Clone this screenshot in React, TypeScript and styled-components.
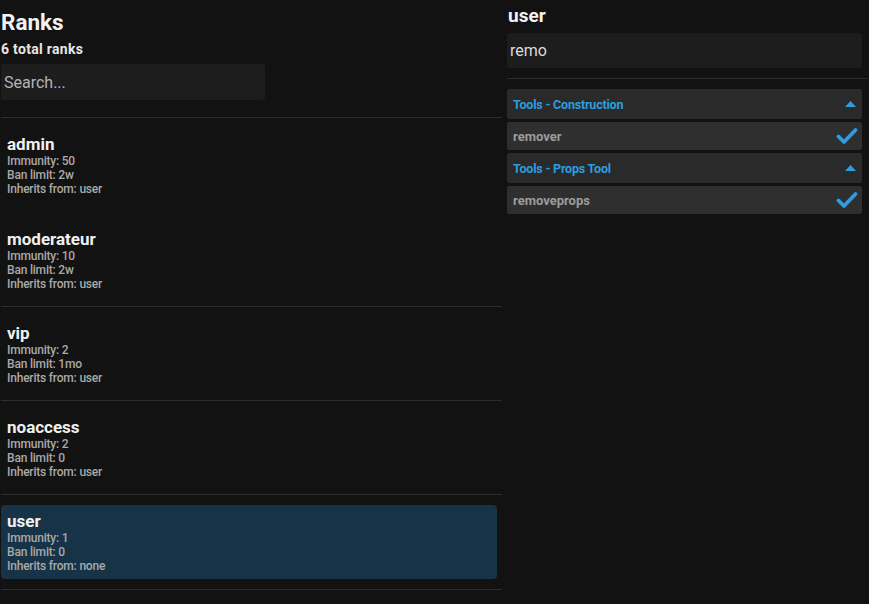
import styled, { createGlobalStyle } from 'styled-components';

const GlobalStyle = createGlobalStyle`
  html, body {
    margin: 0;
    padding: 0;
    background: #121212;
  }
  body {
    font-family: 'Roboto', 'Liberation Sans', sans-serif;
    color: #eeeeee;
  }
`;

const Page = styled.div`
  display: flex;
  align-items: flex-start;
  gap: 5px;
  padding-left: 1px;
  min-height: 604px;
`;

const LeftColumn = styled.div`
  width: 501px;
  display: flex;
  flex-direction: column;
`;

const RightColumn = styled.div`
  width: 360px;
  display: flex;
  flex-direction: column;
`;

const Title = styled.h1`
  margin: 9px 0 0;
  font-size: 22.5px;
  line-height: 26px;
  font-weight: 700;
  color: #f2f2f2;
`;

const Subtitle = styled.div`
  margin-top: 6px;
  font-size: 14px;
  line-height: 16px;
  font-weight: 700;
  letter-spacing: 0.3px;
  color: #e6e6e6;
`;

const SearchInput = styled.input<{ $width: string; $height: number }>`
  box-sizing: border-box;
  width: ${(p) => p.$width};
  height: ${(p) => p.$height}px;
  border: none;
  outline: none;
  border-radius: 3px;
  background: #1d1d1d;
  padding: 0 3px;
  font-family: 'Roboto', 'Liberation Sans', sans-serif;
  font-size: 16px;
  color: #dcdcdc;
  &::placeholder {
    color: #b4b4b4;
  }
`;

const Divider = styled.div<{ $top: number }>`
  margin-top: ${(p) => p.$top}px;
  height: 1px;
  background: #2d2d2d;
`;

const RankList = styled.div`
  display: flex;
  flex-direction: column;
`;

const RankItem = styled.div<{ $first?: boolean }>`
  padding: 10px 5px ${(p) => (p.$first ? 11 : 10)}px 0;
  border-bottom: 1px solid ${(p) => (p.$first ? 'transparent' : '#2d2d2d')};
`;

const RankCard = styled.div<{ $selected?: boolean }>`
  box-sizing: border-box;
  height: ${(p) => (p.$selected ? 74 : 73)}px;
  padding: 5px 6px 0;
  border-radius: 4px;
  background: ${(p) => (p.$selected ? '#163347' : 'transparent')};
`;

const RankName = styled.div`
  font-size: 17px;
  line-height: 22px;
  font-weight: 700;
  color: #f0f0f0;
`;

const RankDetail = styled.div`
  font-size: 12px;
  line-height: 13.8px;
  font-weight: 500;
  letter-spacing: -0.2px;
  color: #a9a9a9;
`;

const UserTitle = styled.h2`
  margin: 5px 0 0 1px;
  font-size: 19px;
  line-height: 22px;
  font-weight: 700;
  color: #f2f2f2;
`;

const PermList = styled.div`
  margin-top: 10px;
  width: 355px;
  display: flex;
  flex-direction: column;
  gap: 3px;
`;

const GroupHeader = styled.div`
  height: 30px;
  display: flex;
  align-items: center;
  justify-content: space-between;
  padding: 0 6px;
  border-radius: 2px;
  background: #2a2a2a;
  font-size: 12.5px;
  font-weight: 700;
  letter-spacing: -0.2px;
  color: #2e9ddf;
`;

const PermRow = styled.div`
  height: 28px;
  display: flex;
  align-items: center;
  justify-content: space-between;
  padding: 0 4px 0 6px;
  border-radius: 2px;
  background: #2f2f2f;
  font-size: 13px;
  font-weight: 700;
  color: #9c9c9c;
`;

const CaretUp = () => (
  <svg width="11" height="6" viewBox="0 0 11 6">
    <polygon points="0,6 5.5,0 11,6" fill="#2e9ddf" />
  </svg>
);

const Check = () => (
  <svg width="22" height="18" viewBox="0 0 22 18">
    <polyline
      points="2.5,9.5 8,15 19.5,3"
      fill="none"
      stroke="#2e9ddf"
      strokeWidth="3.8"
      strokeLinecap="round"
      strokeLinejoin="round"
    />
  </svg>
);

type Rank = {
  name: string;
  immunity: number;
  banLimit: string;
  inherits: string;
};

const ranks: Rank[] = [
  { name: 'admin', immunity: 50, banLimit: '2w', inherits: 'user' },
  { name: 'moderateur', immunity: 10, banLimit: '2w', inherits: 'user' },
  { name: 'vip', immunity: 2, banLimit: '1mo', inherits: 'user' },
  { name: 'noaccess', immunity: 2, banLimit: '0', inherits: 'user' },
  { name: 'user', immunity: 1, banLimit: '0', inherits: 'none' },
];

const groups = [
  { title: 'Tools - Construction', perms: ['remover'] },
  { title: 'Tools - Props Tool', perms: ['removeprops'] },
];

export function App() {
  return (
    <>
      <GlobalStyle />
      <Page>
        <LeftColumn>
          <Title>Ranks</Title>
          <Subtitle>6 total ranks</Subtitle>
          <SearchInput
            style={{ marginTop: 7 }}
            $width="264px"
            $height={36}
            placeholder="Search..."
            readOnly
          />
          <Divider $top={17} />
          <RankList>
            {ranks.map((r, i) => (
              <RankItem key={r.name} $first={i === 0}>
                <RankCard $selected={r.name === 'user'}>
                  <RankName>{r.name}</RankName>
                  <RankDetail>Immunity: {r.immunity}</RankDetail>
                  <RankDetail>Ban limit: {r.banLimit}</RankDetail>
                  <RankDetail>Inherits from: {r.inherits}</RankDetail>
                </RankCard>
              </RankItem>
            ))}
          </RankList>
        </LeftColumn>
        <RightColumn>
          <UserTitle>user</UserTitle>
          <SearchInput
            style={{ marginTop: 6 }}
            $width="355px"
            $height={35}
            value="remo"
            readOnly
          />
          <Divider $top={10} />
          <PermList>
            {groups.map((g) => (
              <>
                <GroupHeader key={g.title}>
                  {g.title}
                  <CaretUp />
                </GroupHeader>
                {g.perms.map((p) => (
                  <PermRow key={p}>
                    {p}
                    <Check />
                  </PermRow>
                ))}
              </>
            ))}
          </PermList>
        </RightColumn>
      </Page>
    </>
  );
}

export default App;
